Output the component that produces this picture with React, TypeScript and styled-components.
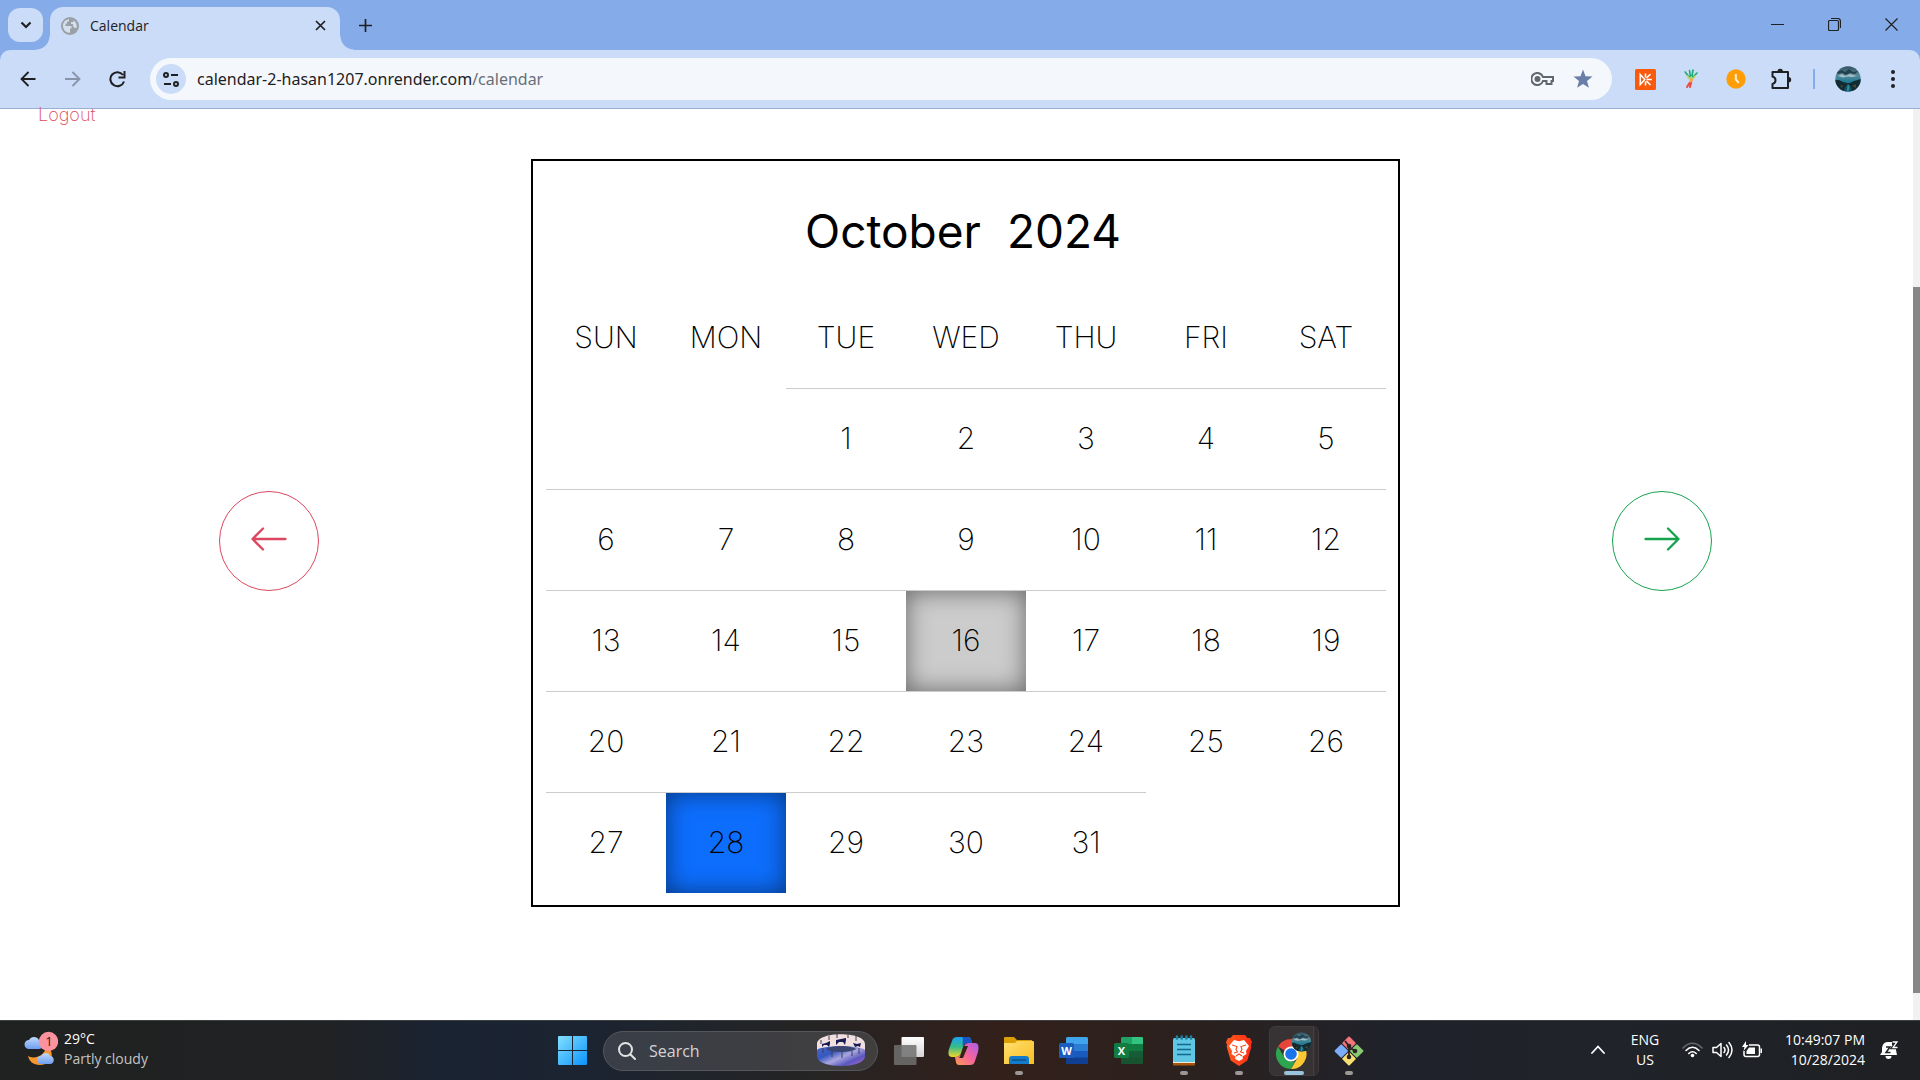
import React from 'react';
import styled, { createGlobalStyle } from 'styled-components';

const ui = `"Open Sans", "Noto Sans", sans-serif`;

const GlobalStyle = createGlobalStyle`
  *, *::before, *::after { box-sizing: border-box; }
  body { margin: 0; background: #fff; font-family: ${ui}; }
  button, input { font: inherit; color: inherit; border: 0; background: none; padding: 0; margin: 0; outline: 0; }
  svg { display: block; flex: none; }
`;

const Screen = styled.div`
  display: flex;
  flex-direction: column;
  height: 100vh;
  overflow: hidden;
`;

/* ---------- browser frame ---------- */
const TabStrip = styled.div`
  display: flex;
  height: 50px;
  padding-left: 8px;
  background: #85ace9;
  color: #1f2023;
`;
const TabSearch = styled.button`
  display: grid;
  place-items: center;
  width: 35px;
  height: 34px;
  margin-top: 8px;
  border-radius: 12px;
  background: #cadcf7;
`;
const Tab = styled.div`
  position: relative;
  display: flex;
  align-items: center;
  width: 290px;
  margin: 7px 0 0 7px;
  padding: 0 12px 6px 11px;
  border-radius: 13px 13px 0 0;
  background: #cadcf7;
  font-size: 14px;
  &::before, &::after {
    content: '';
    position: absolute;
    bottom: 0;
    width: 14px;
    height: 14px;
  }
  &::before { right: 100%; background: radial-gradient(circle at 0 0, transparent 13px, #cadcf7 14px); }
  &::after { left: 100%; background: radial-gradient(circle at 100% 0, transparent 13px, #cadcf7 14px); }
`;
const TabTitle = styled.span`
  flex: 1;
  margin-left: 11px;
`;
const IconButton = styled.button<{ $w: number }>`
  display: grid;
  place-items: center;
  width: ${(p) => p.$w}px;
  height: 100%;
`;
const TabClose = styled.button`
  display: grid;
  place-items: center;
  width: 16px;
  height: 16px;
`;
const WindowButtons = styled.div`
  display: flex;
  margin-left: auto;
  padding-bottom: 2px;
`;
const ToolbarBack = styled.div`
  background: #85ace9;
`;
const Toolbar = styled.div`
  display: flex;
  align-items: center;
  height: 59px;
  padding: 0 5px;
  border-bottom: 1px solid #9aaed6;
  border-radius: 10px 10px 0 0;
  background: #cadcf7;
  color: #1f2023;
`;
const Omnibox = styled.label`
  display: flex;
  flex: 1;
  align-items: center;
  height: 42px;
  margin: 0 11px 0 10px;
  padding: 0 19px 0 6px;
  border-radius: 21px;
  background: #f4f8fd;
  font-family: "Noto Sans", sans-serif;
  font-size: 16px;
`;
const SiteInfo = styled.span`
  display: grid;
  place-items: center;
  width: 30px;
  height: 30px;
  margin-right: 11px;
  border-radius: 50%;
  background: #cadcf7;
`;
const Address = styled.input`
  field-sizing: content;
`;
const Path = styled.span`
  flex: 1;
  color: #6a6f76;
`;
const OmniIcons = styled.span`
  display: flex;
  align-items: center;
  gap: 19px;
`;
const Separator = styled.span`
  width: 2px;
  height: 20px;
  margin: 0 10px;
  background: #85ace9;
`;

/* ---------- web page ---------- */
const Viewport = styled.div`
  display: flex;
  flex: 1;
  min-height: 0;
`;
const Page = styled.main`
  flex: 1;
  font-family: Inter, sans-serif;
  font-weight: 200;
  color: #000;
`;
const Logout = styled.a`
  display: block;
  width: max-content;
  margin-left: 38px;
  font-size: 18px;
  line-height: 12px;
  color: #dc4a58;
  text-decoration: none;
`;
const Planner = styled.div`
  display: flex;
  align-items: center;
  justify-content: center;
  gap: 212px;
  margin-top: 38px;
  padding-left: 18px;
`;
const Step = styled.button<{ $tone: string }>`
  display: grid;
  place-items: center;
  width: 100px;
  height: 100px;
  margin-top: 16px;
  padding-bottom: 4px;
  border: 1px solid ${(p) => p.$tone};
  border-radius: 50%;
  color: ${(p) => p.$tone};
`;
const Card = styled.section`
  padding: 12px 12px 12px 13px;
  border: 2px solid #000;
`;
const Title = styled.h1`
  display: flex;
  align-items: center;
  justify-content: center;
  gap: 26px;
  height: 115px;
  margin: 0;
  padding-right: 6px;
  font-size: 46px;
  font-weight: 400;
`;
const Table = styled.table`
  border-spacing: 0;
  table-layout: fixed;
  text-align: center;
  font-size: 30px;
`;
const HeadCell = styled.th`
  width: 120px;
  height: 100px;
  padding: 0 0 2px;
  font-weight: 200;
`;
const Day = styled.td<{ $fill?: string; $empty?: boolean }>`
  width: 120px;
  height: 101px;
  padding: 0 0 2px;
  border-top: 1px solid ${(p) => (p.$empty ? 'transparent' : '#ccc')};
  background: ${(p) => p.$fill || 'transparent'} padding-box;
  box-shadow: ${(p) => (p.$fill ? 'inset 0 0 25px rgba(0, 0, 0, 0.5)' : 'none')};
`;
const ScrollTrack = styled.div`
  display: flex;
  flex-direction: column;
  width: 7px;
  background: #f1f1f1;
  &::before { content: ''; flex: 178; }
  &::after { content: ''; flex: 27; }
`;
const ScrollThumb = styled.div`
  flex: 706;
  background: #878785;
`;

/* ---------- taskbar ---------- */
const Taskbar = styled.footer`
  display: grid;
  grid-template-columns: 1fr auto 1fr;
  height: 60px;
  padding-left: 1px;
  border-top: 1px solid #3c4042;
  background: linear-gradient(90deg, #202121 0, #202223 17%, #1a2332 23%, #1c2431 31%, #252424 42%, #33201b 52%, #2b211e 62%, #1f222b 73%, #202329 83%, #1e2023 100%);
  color: #fff;
  font-size: 14px;
  line-height: 20px;
`;
const Weather = styled.button`
  display: flex;
  justify-self: start;
  align-items: center;
  gap: 6px;
  padding: 0 0 4px 23px;
  text-align: left;
`;
const Muted = styled.span`
  display: block;
  color: #c4c4c4;
`;
const Apps = styled.nav`
  display: flex;
  align-items: center;
`;
const AppButton = styled.button<{ $state?: 'open' | 'active' }>`
  position: relative;
  display: grid;
  place-items: center;
  width: 55px;
  height: 59px;
  &::after {
    content: '';
    position: absolute;
    bottom: 5px;
    left: 50%;
    width: ${(p) => (p.$state === 'active' ? 20 : 8)}px;
    height: 4px;
    border-radius: 2px;
    transform: translateX(-50%);
    background: ${(p) => (p.$state === 'active' ? '#9ac3dc' : p.$state ? '#9c9896' : 'transparent')};
  }
`;
const ActivePlate = styled.span`
  display: grid;
  place-items: center;
  width: 50px;
  height: 50px;
  border: 1px solid #3f3a3b;
  border-radius: 6px;
  background: linear-gradient(90deg, #373233 43px, #4a4546 43px, #302c2e 45px);
`;
const SearchBox = styled.label`
  display: flex;
  align-items: center;
  width: 275px;
  height: 40px;
  margin: 0 3px;
  padding: 0 12px 0 14px;
  border: 1px solid #55575d;
  border-radius: 20px;
  background: linear-gradient(90deg, #393e48, #413e3e);
  font-size: 16px;
`;
const SearchInput = styled.input`
  flex: 1;
  min-width: 0;
  margin-left: 13px;
  &::placeholder { color: #d4d4d6; opacity: 1; }
`;
const Tray = styled.div`
  display: flex;
  justify-self: end;
  align-items: center;
  padding: 0 21px 2px 0;
`;
const Language = styled.button`
  width: 40px;
  margin: 0 17px 0 20px;
  text-align: center;
`;
const QuickSettings = styled.button`
  display: flex;
  gap: 9px;
  align-items: center;
`;
const Clock = styled.button`
  width: 102px;
  margin-right: 14px;
  text-align: right;
  white-space: nowrap;
`;

const line = { fill: 'none', stroke: 'currentColor', strokeWidth: 2 } as const;

const Globe = () => (
  <svg width="18" height="20" viewBox="0 0 18 18">
    <circle cx="9" cy="9" r="9" fill="#9aa0a6" />
    <path d="M2 9C2 5 4.500 2.500 8 2.200V4.500H6V6.500H4.500V9H10.500V11.500H9V15.800C5 15.800 2.300 13 2 9zM12.500 3.200C15 5 16.300 8 15.600 11H13.500L12 9V7H10V5H12.500z" fill="#d5dfed" />
  </svg>
);
const Key = () => (
  <svg width="23" height="14" viewBox="0 0 23 14" fill="none" stroke="#62676e" strokeWidth="2">
    <path d="M12 5A6 6 0 1 0 12 9H15.500V12H20.500V9H22V5Z" /><circle cx="6.500" cy="7" r="2" fill="#62676e" />
  </svg>
);
const Star = () => (
  <svg width="20" height="20" viewBox="0 0 20 20">
    <path d="M10 .5l2.500 6.700 7 .3-5.500 4.400 1.900 6.900L10 14.900l-5.900 3.900L6 11.900.5 7.500l7-.3z" fill="#6a7fa8" />
  </svg>
);
const BurstExt = () => (
  <svg width="21" height="21" viewBox="0 0 21 21">
    <rect width="21" height="21" rx="1.500" fill="#fa5a0c" />
    <path d="M5.200 5.500v10l4.600-5z" stroke="#fff" strokeWidth="1.500" fill="none" />
    <path d="M11.500 10.500H16.800M10.500 8.500V4.500M10.500 12.500V16.500M11.500 9l4-4M11.500 12l4 4" stroke="#fff" strokeWidth="1.600" />
  </svg>
);
const CarrotExt = () => (
  <svg width="14" height="20" viewBox="0 0 14 20" fill="none" strokeLinecap="round">
    <path d="M5 8L1.200 3M6.500 8L5.500 1.500M8 7l1-6M9 8l4-4" stroke="#19a974" strokeWidth="1.600" />
    <path d="M3.500 7l3 4M11 7l-3 4M7 8v3" stroke="#b8d65a" strokeWidth="1.600" />
    <path d="M7.500 11l-1 3" stroke="#f7a456" strokeWidth="3" /><path d="M5.500 14l-2.500 4M7 14l-1 4" stroke="#ef4a40" strokeWidth="2" />
  </svg>
);
const ClockExt = () => (
  <svg width="20" height="20" viewBox="0 0 20 20">
    <circle cx="10" cy="10" r="9.700" fill="#ff9d07" /><path d="M9.800 5v5.500l3 3.500" fill="none" stroke="#fff0d4" strokeWidth="2" />
  </svg>
);
const Puzzle = () => (
  <svg width="22" height="22" viewBox="0 0 22 22">
    <path {...line} strokeLinejoin="round" d="M2.500 4H18V20H2.500V16C6.500 15 6.500 9.500 2.500 8.500Z" />
    <path d="M7.500 3.500a2.700 2.700 0 0 1 5.400 0zM18.500 9a2.700 2.700 0 0 1 0 5.400z" fill="currentColor" />
  </svg>
);
const Landscape = ({ size, id }: { size: number; id: string }) => (
  <svg width={size} height={size} viewBox="0 0 26 26">
    <defs>
      <clipPath id={id}><circle cx="13" cy="13" r="12.700" /></clipPath>
      <linearGradient id={`${id}-sky`} x2="0" y2="1"><stop stopColor="#2f5362" /><stop offset=".35" stopColor="#5d8797" /><stop offset=".6" stopColor="#1f7d96" /><stop offset="1" stopColor="#123e4c" /></linearGradient>
    </defs>
    <g clipPath={`url(#${id})`}>
      <rect width="26" height="26" fill={`url(#${id}-sky)`} />
      <path d="M2 6l5-2 3 2 4-3 4 3 5-1-3 3-5-1-4 2-4-2-4 1z" fill="#23424f" />
      <path d="M3 10l4-2 3 2 5-2 3 1 4 1-5 1-4-.5-5 1z" fill="#a4bfc8" />
      <path d="M0 14l4 0 4 2 4 1 3 0 4-2 7-2v13H18l-3-6-2-2-3 4-2 4H0z" fill="#132a31" />
      <path d="M13 18l1.500 3-1 5h-2z" fill="#2b8ba6" /><path d="M17 20l4-2v4zM5 20l3-1-1 3z" fill="#3d4a3c" />
    </g>
  </svg>
);

const WeatherIcon = () => (
  <svg width="34" height="36" viewBox="0 0 34 36">
    <defs><linearGradient id="cl" x2="0" y2="1"><stop stopColor="#c1d8fb" /><stop offset="1" stopColor="#6f9ff0" /></linearGradient></defs>
    <path d="M4 25C8 28 21 27 22 15C31 19 30 34 16 34C9 34 5 30 4 25z" fill="#f6962b" />
    <path d="M5 18a4.500 4.500 0 0 1 0-9C7 5 13 5 15 9c5 0 6 9 0 9z" fill="url(#cl)" />
    <path d="M17 33a4 4 0 0 1 0-8c2-4 8-4 9 0 5 0 5 8 0 8z" fill="url(#cl)" />
    <circle cx="24.500" cy="10.500" r="9.700" fill="#fb929d" />
    <text x="25" y="15" textAnchor="middle" fontSize="13" fill="#222">1</text>
  </svg>
);
const WindowsLogo = () => (
  <svg width="29" height="29" viewBox="0 0 29 29">
    <defs><linearGradient id="win" x2="1" y2="1"><stop stopColor="#83e0ff" /><stop offset="1" stopColor="#0a93fb" /></linearGradient></defs>
    <path d="M0 1q0-1 1-1h13v14H0zM15 0h13q1 0 1 1v13H15zM0 15h14v14H1q-1 0-1-1zM15 15h14v13q0 1-1 1H15z" fill="url(#win)" />
  </svg>
);
const Fence = () => (
  <svg width="48" height="33" viewBox="0 0 48 33">
    <defs><linearGradient id="fn" x2="1" y2="1"><stop stopColor="#4b6bd0" /><stop offset=".35" stopColor="#3657bd" /><stop offset=".55" stopColor="#a9a6e0" /><stop offset=".75" stopColor="#5a58bf" /><stop offset="1" stopColor="#c066da" /></linearGradient></defs>
    <path d="M0 10v13c2 12 46 12 48 0V10z" fill="url(#fn)" />
    <path d="M0 10C0-3 48-3 48 10V16C44 11 4 11 0 16z" fill="#f1dfe0" />
    <path d="M9 15C15 11 33 11 39 15C34 19 14 19 9 15z" fill="#3a4670" />
    <path d="M15 17v6M25 18v6M35 17v5M42 14v6M6 14v5M12 2v4M20 0v4M31 0v4M39 2v5M4 6v4" stroke="#3b3e56" strokeWidth="1" />
    <path d="M5 10l4-1 4-2v3l-1 3-2-2-3 0-2 2zM19 6l5-1 5-1 0 2-1 5-2-3-4 0-3 3zM36 9l4 1 4-1-1 4-2-1-3 1z" fill="#171c53" />
  </svg>
);
const TaskView = () => (
  <svg width="30" height="28" viewBox="0 0 30 28">
    <defs><linearGradient id="tv" x2="0" y2="1"><stop stopColor="#fff" /><stop offset="1" stopColor="#d5d5d5" /></linearGradient></defs>
    <rect x="7.500" width="22.500" height="20" rx="1" fill="url(#tv)" /><rect y="8" width="22.500" height="20" rx="1" fill="#707070" opacity=".85" />
  </svg>
);
const Copilot = () => (
  <svg width="31" height="28" viewBox="0 0 31 28">
    <defs>
      <linearGradient id="c1" x2="0" y2="1"><stop stopColor="#1c9ff5" /><stop offset=".5" stopColor="#35bd8a" /><stop offset="1" stopColor="#f4d52b" /></linearGradient>
      <linearGradient id="c2" x1="1" x2="0" y2="1"><stop stopColor="#a95df0" /><stop offset=".5" stopColor="#f4659b" /><stop offset="1" stopColor="#fd9a52" /></linearGradient>
    </defs>
    <path d="M9 0H20C23 0 23 3 24 6H19C17 6 16 7 15 10L13 16C12 19 10 20 7 20H4C0 20 0 16 1 12L4 4C5 1 6 0 9 0z" fill="url(#c1)" />
    <path d="M14 0H20C23 0 23 3 24 6H19C17 6 16 7 15 10C14 5 16 1 14 0z" fill="#1657c5" />
    <path d="M22 28H11C8 28 8 25 7 20C11 20 12 19 13 17L16 10C17 7 18 6 21 6H27C31 6 31 11 30 15L27 24C26 27 25 28 22 28z" fill="url(#c2)" />
    <path d="M16 9h4l-5 12h-4q1-1 2-4z" fill="#32211c" />
  </svg>
);
const Folder = () => (
  <svg width="30" height="27" viewBox="0 0 30 27">
    <defs><linearGradient id="fo" x2="1" y2="1"><stop stopColor="#ffe071" /><stop offset="1" stopColor="#f9bd21" /></linearGradient></defs>
    <path d="M0 1q0-1 1-1h9l3 3h15v10H0z" fill="#dba007" /><path d="M0 6h11l2-2h16q1 0 1 1v22H0z" fill="url(#fo)" />
    <path d="M5 27v-5q0-3 3-3h14q3 0 3 3v5z" fill="#137bc9" /><path d="M8 23h14" stroke="#0c538d" strokeWidth="1.500" />
  </svg>
);
const Office = ({ letter, c }: { letter: string; c: string[] }) => (
  <svg width="29" height="27" viewBox="0 0 29 27">
    <rect x="7" width="22" height="27" rx="1.500" fill={c[2]} />
    <path d="M7 7V1.500Q7 0 8.500 0H27.500Q29 0 29 1.500V7z" fill={c[0]} /><path d="M7 7h22v7H7z" fill={c[1]} />
    {letter === 'X' && <path d="M18 0h9.500Q29 0 29 1.500V7H18z" fill={c[4]} />}
    <path d="M7 20.500h22v5q0 1.500-1.500 1.500h-19Q7 27 7 25.500z" fill={c[3]} />
    <rect y="6" width="15" height="15" rx="1.500" fill={c[5]} />
    <text x="7.500" y="17.500" textAnchor="middle" fontSize="11" fontWeight="700" fill="#fff">{letter}</text>
  </svg>
);
const Notepad = () => (
  <svg width="22" height="31" viewBox="0 0 22 31">
    <rect y="24" width="22" height="6.500" rx="1" fill="#a8560f" /><path d="M0 24h22v4H0z" fill="#f3e6d4" />
    <rect y="3" width="22" height="24" rx="1.500" fill="#5fc6e4" />
    <path d="M4 9.500h14M4 14.500h14M4 19.500h14" stroke="#12698a" strokeWidth="1.700" />
    <path d="M4 1.500v2M8.700 1.500v2M13.400 1.500v2M18 1.500v2" stroke="#1c7f9c" strokeWidth="2.600" strokeLinecap="round" />
  </svg>
);
const Brave = () => (
  <svg width="26" height="31" viewBox="0 0 26 31">
    <defs><linearGradient id="br" x2="1"><stop stopColor="#ff5a1c" /><stop offset="1" stopColor="#ff2d14" /></linearGradient></defs>
    <path d="M7 0h12l2.500 3L24 3l2 4-1 3 .3 2-4 13.500L13 31 4.700 25.500.7 12 1 10 0 7l2-4 2.500 0z" fill="url(#br)" />
    <path d="M8 5l5 1.200L18 5l5 6-3 5 .5 3-4 2.500.3 2.500L13 26l-3.800-2 .3-2.500-4-2.500.5-3-3-5z" fill="#fff" />
    <path d="M6 10l5 1.500-1 3 1.500 2.500L8 18M20 10l-5 1.500 1 3-1.500 2.500 3.500 1M10 21l3-2 3 2" fill="none" stroke="#ff461a" strokeWidth="1.100" />
  </svg>
);
const Chrome = () => (
  <svg width="36" height="37" viewBox="0 0 36 37">
    <path d="M15 22L2 14.500A15 15 0 0 1 28 14.500z" fill="#e8453a" />
    <path d="M15 14.500h13.500A15 15 0 0 1 15 37l6.500-11.200z" fill="#fcc934" /><path d="M15 37A15 15 0 0 1 2 14.500L8.500 25.800l6.500 3.700 4 0z" fill="#2da44e" />
    <circle cx="15" cy="22" r="7.500" fill="#fff" /><circle cx="15" cy="22" r="5.800" fill="#1a73e8" />
    <g transform="translate(15.500 0)"><Landscape size={20} id="badge" /></g>
  </svg>
);
const Git = () => (
  <svg width="30" height="30" viewBox="0 0 30 30">
    <g transform="rotate(45 15 15)">
      <rect x="4.500" y="4.500" width="10" height="10" rx="1" fill="#f2747c" /><rect x="15.500" y="4.500" width="10" height="10" rx="1" fill="#87ca72" />
      <rect x="4.500" y="15.500" width="10" height="10" rx="1" fill="#7badfb" /><rect x="15.500" y="15.500" width="10" height="10" rx="1" fill="#f8df72" />
    </g>
    <path d="M11 5l4 5v12M15 11l6 4" fill="none" stroke="#2a2322" strokeWidth="1.800" />
    <circle cx="15" cy="10" r="2.300" fill="#2a2322" /><circle cx="15" cy="21" r="2.300" fill="#2a2322" /><circle cx="21" cy="15" r="2.300" fill="#2a2322" />
  </svg>
);
const Wifi = () => (
  <svg width="21" height="16" viewBox="0 0 21 16" fill="none" strokeLinecap="round" strokeWidth="1.600">
    <path d="M1 6Q10.500-3.500 20 6" stroke="#666a6c" />
    <path d="M4 8.500Q10.500 2 17 8.500M6.800 11.500Q10.500 8 14.200 11.500" stroke="#fff" /><circle cx="10.500" cy="13.500" r="1.800" fill="#fff" />
  </svg>
);
const Sound = () => (
  <svg width="21" height="18" viewBox="0 0 21 18" fill="none" stroke="#fff" strokeWidth="1.500" strokeLinecap="round" strokeLinejoin="round">
    <path d="M1 6.500h3.500L9 2.500v13l-4.500-4H1zM12 6.500q2 2.500 0 5M14.500 4q4 5 0 10M17 1.500q6 7.500 0 15" />
  </svg>
);
const Battery = () => (
  <svg width="21" height="18" viewBox="0 0 21 18">
    <path d="M7 4h8.500q2 0 2 2v7.500q0 2-2 2H4q-2 0-2-2V10" fill="none" stroke="#fff" strokeWidth="1.500" />
    <path d="M7 6.500h6v6.500H4.500v-3zM18.500 7.500H20v4.500h-1.500zM4 0L0 6h2.500L1.500 10 6.500 4H4z" fill="#fff" />
  </svg>
);
const Bell = () => (
  <svg width="20" height="20" viewBox="0 0 20 20">
    <path d="M1 15l2-3V8a6 6 0 0 1 7-6h3v3h4v5l1 5zM6.500 16h6a3 3 0 0 1-6 0z" fill="#fff" />
    <path d="M7 7h4l-4 5.500h4.500" fill="none" stroke="#1e2023" strokeWidth="1.500" />
    <path d="M13.500 2h4.500L14 7.500h4.500" fill="none" stroke="#1e2023" strokeWidth="3.500" /><path d="M13.500 2h4.500L14 7.500h4.500" fill="none" stroke="#fff" strokeWidth="1.300" />
  </svg>
);
const LongArrow = ({ flip }: { flip?: boolean }) => (
  <svg width="36" height="24" viewBox="0 0 36 24" fill="none" stroke="currentColor" strokeWidth="2.300" strokeLinecap="round" strokeLinejoin="round">
    <path d={flip ? 'M1.500 12h33M24 1.500L34.500 12 24 22.500' : 'M34.500 12H1.500M12 1.500L1.500 12 12 22.500'} />
  </svg>
);

const weekdays = ['SUN', 'MON', 'TUE', 'WED', 'THU', 'FRI', 'SAT'];
const leading = 2;
const daysInMonth = 31;
const fills: Record<number, string> = { 16: '#ccc', 28: '#0d6efd' };
const weeks = Array.from({ length: 5 }, (_, w) =>
  Array.from({ length: 7 }, (_, d) => {
    const n = w * 7 + d - leading + 1;
    return n > 0 && n <= daysInMonth ? n : null;
  }),
);

export default function App() {
  return (
    <Screen>
      <GlobalStyle />
      <TabStrip>
        <TabSearch aria-label="Search tabs">
          <svg width="12" height="8" viewBox="0 0 12 8"><path {...line} strokeWidth={2.2} d="M1.500 1.500L6 6l4.500-4.500" /></svg>
        </TabSearch>
        <Tab>
          <Globe />
          <TabTitle>Calendar</TabTitle>
          <TabClose aria-label="Close tab">
            <svg width="11" height="11" viewBox="0 0 11 11"><path {...line} strokeWidth={1.7} d="M1 1l9 9M10 1l-9 9" /></svg>
          </TabClose>
        </Tab>
        <IconButton $w={50} aria-label="New tab">
          <svg width="13" height="13" viewBox="0 0 13 13"><path {...line} strokeWidth={1.7} d="M6.500 0v13M0 6.500h13" /></svg>
        </IconButton>
        <WindowButtons>
          <IconButton $w={57} aria-label="Minimize">
            <svg width="13" height="13" viewBox="0 0 13 13"><path {...line} strokeWidth={1} d="M0 6.500h13" /></svg>
          </IconButton>
          <IconButton $w={57} aria-label="Restore">
            <svg width="13" height="13" viewBox="0 0 13 13"><path {...line} strokeWidth={1.2} d="M1.800 2.500h7.400q1.300 0 1.300 1.300v7.400q0 1.300-1.300 1.300H1.800Q.5 12.500.5 11.200V3.800Q.5 2.500 1.800 2.500zM3 .5h6.500q3 0 3 3V10" /></svg>
          </IconButton>
          <IconButton $w={57} aria-label="Close">
            <svg width="13" height="13" viewBox="0 0 13 13"><path {...line} strokeWidth={1.2} d="M.5.5l12 12M12.500.5l-12 12" /></svg>
          </IconButton>
        </WindowButtons>
      </TabStrip>
      <ToolbarBack>
        <Toolbar>
          <IconButton $w={45} aria-label="Back">
            <svg width="16" height="16" viewBox="0 0 16 16"><path {...line} strokeWidth={1.8} d="M15.500 8H2M8.500 1L1.500 8l7 7" /></svg>
          </IconButton>
          <IconButton $w={45} aria-label="Forward">
            <svg width="16" height="16" viewBox="0 0 16 16"><path {...line} strokeWidth={1.8} stroke="#8894a9" d="M0 8h14M7.500 1l7 7-7 7" /></svg>
          </IconButton>
          <IconButton $w={45} aria-label="Reload">
            <svg width="17" height="17" viewBox="0 0 17 17"><path {...line} d="M14 4A7 7 0 1 0 15 10.500M15.500 0v6.500H9.500" /></svg>
          </IconButton>
          <Omnibox>
            <SiteInfo>
              <svg width="16" height="15" viewBox="0 0 16 15"><g {...line}><circle cx="3" cy="3" r="2" /><path d="M8 3h7M1 12h7" /><circle cx="13" cy="12" r="2" /></g></svg>
            </SiteInfo>
            <Address aria-label="Address" defaultValue="calendar-2-hasan1207.onrender.com" />
            <Path>/calendar</Path>
            <OmniIcons><Key /><Star /></OmniIcons>
          </Omnibox>
          <IconButton $w={45} aria-label="Extension"><BurstExt /></IconButton>
          <IconButton $w={45} aria-label="Extension"><CarrotExt /></IconButton>
          <IconButton $w={45} aria-label="Extension"><ClockExt /></IconButton>
          <IconButton $w={45} aria-label="Extensions"><Puzzle /></IconButton>
          <Separator />
          <IconButton $w={45} aria-label="Profile"><Landscape size={26} id="avatar" /></IconButton>
          <IconButton $w={45} aria-label="Menu">
            <svg width="4" height="18" viewBox="0 0 4 18" fill="currentColor"><circle cx="2" cy="2" r="2" /><circle cx="2" cy="9" r="2" /><circle cx="2" cy="16" r="2" /></svg>
          </IconButton>
        </Toolbar>
      </ToolbarBack>

      <Viewport>
        <Page>
          <Logout href="#logout">Logout</Logout>
          <Planner>
            <Step $tone="#dc4661" aria-label="Previous month"><LongArrow /></Step>
            <Card>
              <Title><span>October</span><span>2024</span></Title>
              <Table>
                <thead><tr>{weekdays.map((d) => <HeadCell key={d} scope="col">{d}</HeadCell>)}</tr></thead>
                <tbody>
                  {weeks.map((week, w) => (
                    <tr key={w}>
                      {week.map((n, d) => <Day key={d} $empty={n === null} $fill={n ? fills[n] : undefined}>{n}</Day>)}
                    </tr>
                  ))}
                </tbody>
              </Table>
            </Card>
            <Step $tone="#16a34e" aria-label="Next month"><LongArrow flip /></Step>
          </Planner>
        </Page>
        <ScrollTrack><ScrollThumb /></ScrollTrack>
      </Viewport>

      <Taskbar>
        <Weather>
          <WeatherIcon />
          <span>29°C<Muted>Partly cloudy</Muted></span>
        </Weather>
        <Apps>
          <AppButton aria-label="Start"><WindowsLogo /></AppButton>
          <SearchBox>
            <svg width="18" height="18" viewBox="0 0 18 18" fill="none" stroke="#e3e3e4" strokeWidth="2" strokeLinecap="round"><circle cx="7.500" cy="7.500" r="6.500" /><path d="M12.500 12.500L17 17" /></svg>
            <SearchInput type="search" placeholder="Search" aria-label="Search" />
            <Fence />
          </SearchBox>
          <AppButton aria-label="Task view"><TaskView /></AppButton>
          <AppButton aria-label="Copilot"><Copilot /></AppButton>
          <AppButton aria-label="File Explorer" $state="open"><Folder /></AppButton>
          <AppButton aria-label="Word"><Office letter="W" c={['#41a5ee', '#2b7cd3', '#185abd', '#103f91', '', '#1a5dbe']} /></AppButton>
          <AppButton aria-label="Excel"><Office letter="X" c={['#21a366', '#107c41', '#185c37', '#17532f', '#33c481', '#107c41']} /></AppButton>
          <AppButton aria-label="Notepad" $state="open"><Notepad /></AppButton>
          <AppButton aria-label="Brave" $state="open"><Brave /></AppButton>
          <AppButton aria-label="Chrome" $state="active"><ActivePlate><Chrome /></ActivePlate></AppButton>
          <AppButton aria-label="Git" $state="open"><Git /></AppButton>
        </Apps>
        <Tray>
          <button aria-label="Show hidden icons">
            <svg width="14" height="9" viewBox="0 0 14 9" fill="none" stroke="#fff" strokeWidth="1.800" strokeLinecap="round"><path d="M1 8l6-6.500L13 8" /></svg>
          </button>
          <Language>ENG<br />US</Language>
          <QuickSettings aria-label="Quick settings"><Wifi /><Sound /><Battery /></QuickSettings>
          <Clock>10:49:07 PM<br />10/28/2024</Clock>
          <button aria-label="Notifications"><Bell /></button>
        </Tray>
      </Taskbar>
    </Screen>
  );
}
